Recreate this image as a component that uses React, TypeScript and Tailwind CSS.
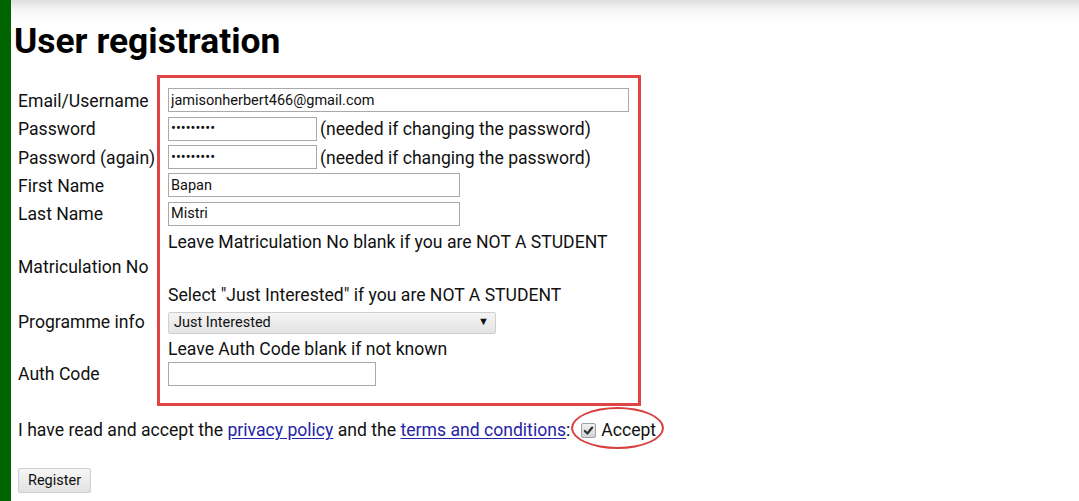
import React from "react"

const font = { fontFamily: "Roboto, 'Noto Sans', sans-serif" }

const box = "border-x-[3px] border-[#e04444] pl-[8px] pr-[9px]"

function Label({ children, className = "" }: { children: React.ReactNode; className?: string }) {
  return <div className={`w-[139px] shrink-0 h-[28px] pt-[2px] flex items-center text-[17.6px] text-[#111] whitespace-nowrap ${className}`}>{children}</div>
}

function TextBox({ value, width, type = "text" }: { value: string; width: string; type?: string }) {
  return (
    <input
      type={type}
      defaultValue={value}
      className={`${width} h-[24px] border border-[#a9a9a9] bg-white px-[2px] text-[14.5px] text-[#111] outline-none`}
      style={font}
    />
  )
}

function Hint({ children }: { children: React.ReactNode }) {
  return <div className="h-[28px] pt-[1px] flex items-center text-[17.6px] text-[#111] whitespace-nowrap">{children}</div>
}

export default function App() {
  return (
    <div className="flex w-[1079px] h-[501px] overflow-hidden bg-white" style={font}>
      <div className="w-[11px] shrink-0 bg-[#006400]" />
      <div className="flex-1 pl-[3px] bg-[linear-gradient(to_bottom,#dedede_0px,#f6f6f6_10px,#ffffff_22px)]">
        <h1 className="pt-[24px] text-[35.4px] font-bold leading-[35px] text-black">User registration</h1>

        <div className="mt-[16px] ml-[4px]">
          {/* Email */}
          <div className="flex items-end">
            <Label>Email/Username</Label>
            <div className={`${box} w-[484px] border-t-[3px] pt-[8px] h-[39px] flex items-center`}>
              <TextBox value="jamisonherbert466@gmail.com" width="w-[462px]" />
            </div>
          </div>

          {/* Password */}
          <div className="flex items-center">
            <Label>Password</Label>
            <div className={`${box} w-[484px] h-[29px] flex items-center gap-[3px]`}>
              <TextBox type="password" value="abcdefghi" width="w-[149px]" />
              <span className="pt-[2px] text-[17.6px] text-[#111] whitespace-nowrap">(needed if changing the password)</span>
            </div>
          </div>

          {/* Password again */}
          <div className="flex items-center">
            <Label>Password (again)</Label>
            <div className={`${box} w-[484px] h-[28px] flex items-center gap-[3px]`}>
              <TextBox type="password" value="abcdefghi" width="w-[149px]" />
              <span className="pt-[2px] text-[17.6px] text-[#111] whitespace-nowrap">(needed if changing the password)</span>
            </div>
          </div>

          {/* First Name */}
          <div className="flex items-center">
            <Label>First Name</Label>
            <div className={`${box} w-[484px] h-[28px] flex items-center`}>
              <TextBox value="Bapan" width="w-[292px]" />
            </div>
          </div>

          {/* Last Name */}
          <div className="flex items-center">
            <Label>Last Name</Label>
            <div className={`${box} w-[484px] h-[29px] flex items-center`}>
              <TextBox value="Mistri" width="w-[292px]" />
            </div>
          </div>

          {/* Matriculation */}
          <div className="flex items-end">
            <Label className="mb-[1px]">Matriculation No</Label>
            <div className={`${box} w-[484px] h-[53px]`}>
              <Hint>Leave Matriculation No blank if you are NOT A STUDENT</Hint>
            </div>
          </div>

          {/* Programme info */}
          <div className="flex items-end">
            <Label className="mb-[1px]">Programme info</Label>
            <div className={`${box} w-[484px] h-[55px]`}>
              <Hint>Select "Just Interested" if you are NOT A STUDENT</Hint>
              <div className="h-[27px] flex items-center">
                <div className="w-[328px] h-[22px] border border-[#cfcfcf] rounded-[2px] bg-[linear-gradient(to_bottom,#f4f4f4,#e4e4e4)] flex items-center justify-between pl-[5px] pr-[6px] text-[14.5px] text-[#111]">
                  <span>Just Interested</span>
                  <span className="text-[11px]">▼</span>
                </div>
              </div>
            </div>
          </div>

          {/* Auth Code */}
          <div className="flex items-end">
            <Label className="mb-[19px]">Auth Code</Label>
            <div className={`${box} w-[484px] border-b-[3px] pb-[16px]`}>
              <div className="h-[25px] pt-[1px] flex items-center text-[17.6px] text-[#111]">Leave Auth Code blank if not known</div>
              <div className="h-[26px] flex items-center">
                <TextBox value="" width="w-[208px]" />
              </div>
            </div>
          </div>

          {/* Terms */}
          <div className="mt-[11px] h-[26px] pt-[1px] flex items-center text-[17.6px] text-[#111] whitespace-nowrap">
            <span>I have read and accept the&nbsp;</span>
            <a href="#" className="text-[#2424a8] underline underline-offset-2">privacy policy</a>
            <span>&nbsp;and the&nbsp;</span>
            <a href="#" className="text-[#2424a8] underline underline-offset-2">terms and conditions</a>
            <span>:</span>
            <span className="relative ml-[11px] flex items-center gap-[5px]">
              <span className="w-[15px] h-[15px] rounded-[2px] border border-[#a0a0a0] bg-[linear-gradient(to_bottom,#f2f2f2,#d2d2d2)] flex items-center justify-center">
                <svg viewBox="0 0 12 12" className="w-[11px] h-[11px]">
                  <path d="M2 6.5 L4.8 9.2 L10 2.8" fill="none" stroke="#333" strokeWidth="2.4" strokeLinecap="round" strokeLinejoin="round" />
                </svg>
              </span>
              <span>Accept</span>
              <span className="absolute left-[-10px] top-[-10px] w-[93px] h-[42px] rounded-[50%] border-[2px] border-[#d84040]" />
            </span>
          </div>

          {/* Register */}
          <div className="mt-[25px]">
            <button className="h-[25px] px-[9px] border border-[#cfcfcf] rounded-[2px] bg-[linear-gradient(to_bottom,#f6f6f6,#e2e2e2)] text-[14.5px] text-[#111]">
              Register
            </button>
          </div>
        </div>
      </div>
    </div>
  )
}
